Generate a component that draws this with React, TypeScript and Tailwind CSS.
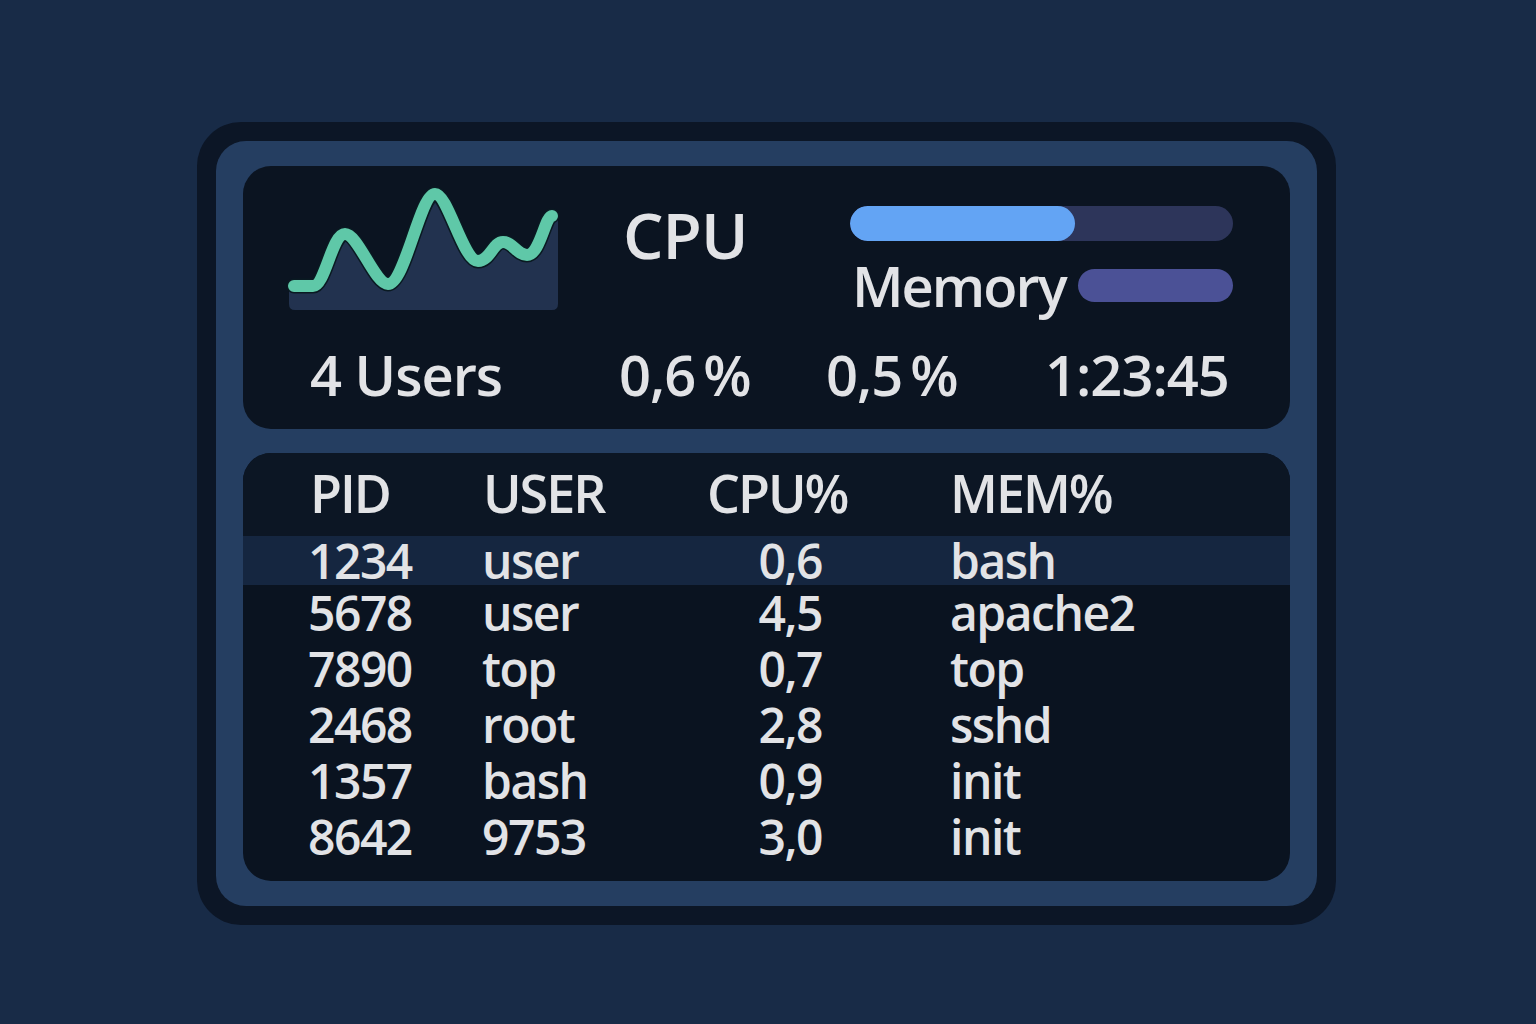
import React from 'react';

const rows = [
  { pid: '1234', user: 'user', cpu: '0,6', cmd: 'bash' },
  { pid: '5678', user: 'user', cpu: '4,5', cmd: 'apache2' },
  { pid: '7890', user: 'top', cpu: '0,7', cmd: 'top' },
  { pid: '2468', user: 'root', cpu: '2,8', cmd: 'sshd' },
  { pid: '1357', user: 'bash', cpu: '0,9', cmd: 'init' },
  { pid: '8642', user: '9753', cpu: '3,0', cmd: 'init' },
];

const linePath =
  'M14 107 L33 107 C45 107 52 55 65 55 C78 55 95 105 108 105 C125 105 140 15 155 15 C168 15 183 82 198 82 C210 82 213 63 223 63 C233 63 237 76 247 76 C260 76 265 37 272 37';

const Sparkline: React.FC = () => (
  <svg width="290" height="140" viewBox="0 0 290 140" className="shrink-0">
    <path
      d={linePath + ' L278 40 L278 125 Q278 131 272 131 L15 131 Q9 131 9 125 L9 107 Z'}
      fill="#22324f"
    />
    <path d={linePath} fill="none" stroke="#0a1a22" strokeWidth="15" strokeLinecap="round" strokeLinejoin="round" />
    <path d={linePath} fill="none" stroke="#5fc8a8" strokeWidth="12" strokeLinecap="round" strokeLinejoin="round" />
  </svg>
);

export default function App() {
  return (
    <div
      className="min-h-screen w-full bg-[#182b47] pt-[122px] pl-[197px] text-[#e2e3e6]"
      style={{ fontFamily: '"Open Sans", "Noto Sans", sans-serif' }}
    >
      <div className="w-[1139px] h-[803px] rounded-[44px] bg-[#0c1626] p-[19px]">
        <div className="h-full rounded-[30px] bg-[#253e61] px-[27px] py-[25px] flex flex-col gap-[24px]">
          {/* summary card */}
          <div className="h-[263px] rounded-[28px] bg-[#0b1421] pl-[37px] pt-[13px] flex flex-col">
            <div className="flex items-start">
              <Sparkline />
              <div className="ml-[53px] mt-[24px] w-[227px] text-[64px] leading-none font-semibold tracking-[-1px]">CPU</div>
              <div className="mt-[27px] flex flex-col">
                <div className="w-[383px] h-[35px] rounded-full bg-[#2d355a] overflow-hidden">
                  <div className="h-full w-[225px] rounded-full bg-[#63a4f4]" />
                </div>
                <div className="mt-[16px] flex items-center h-[56px]">
                  <span className="pl-[2px] text-[56px] leading-none font-semibold tracking-[-2px]">Memory</span>
                  <div className="ml-auto w-[155px] h-[33px] rounded-full bg-[#4b5196]" />
                </div>
              </div>
            </div>
            <div className="mt-[27px] pl-[30px] flex text-[56px] leading-none font-semibold tracking-[-1px]">
              <span className="w-[309px]">4 Users</span>
              <span className="w-[207px]">0,6<span className="ml-[8px]">%</span></span>
              <span className="w-[219px]">0,5<span className="ml-[8px]">%</span></span>
              <span>1:23:45</span>
            </div>
          </div>

          {/* process table */}
          <div className="flex-1 rounded-[28px] bg-[#0a1320] overflow-hidden">
            <div className="h-[83px] bg-[#0c1624] pl-[67px] pt-[14px] flex text-[52px] leading-none font-semibold tracking-[-2px]">
              <span className="w-[173px]">PID</span>
              <span className="w-[224px]">USER</span>
              <span className="w-[243px]">CPU%</span>
              <span>MEM%</span>
            </div>
            {rows.map((r, i) => (
              <div
                key={r.pid}
                className={`pl-[65px] flex items-center text-[48px] leading-none font-semibold tracking-[-1.5px] ${
                  i === 0 ? 'h-[49px] bg-[#152640]' : 'h-[56px]'
                }`}
              >
                <span className="w-[174px]">{r.pid}</span>
                <span className="w-[225px]">{r.user}</span>
                <span className="w-[243px]">
                  <span className="inline-block w-[115px] text-right">{r.cpu}</span>
                </span>
                <span>{r.cmd}</span>
              </div>
            ))}
          </div>
        </div>
      </div>
    </div>
  );
}
